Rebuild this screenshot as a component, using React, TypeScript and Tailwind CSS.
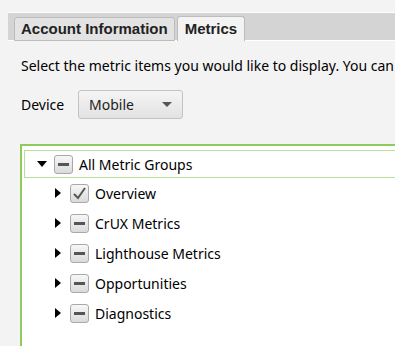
import React from "react";

const Tri = ({ down }: { down?: boolean }) =>
  down ? (
    <svg width="10" height="7" viewBox="0 0 10 7" className="block">
      <polygon points="0,0 10,0 5,6" fill="#000" />
    </svg>
  ) : (
    <svg width="7" height="10" viewBox="0 0 7 10" className="block">
      <polygon points="0,0 6,5 0,10" fill="#000" />
    </svg>
  );

const Box = ({ checked }: { checked?: boolean }) => (
  <div className="w-[19px] h-[19px] rounded-[3px] border border-[#a9a9a9] bg-gradient-to-b from-[#f7f7f7] to-[#dadada] flex items-center justify-center shrink-0">
    {checked ? (
      <svg width="15" height="15" viewBox="0 0 15 15">
        <path d="M2 8 L6 12 L13 2" fill="none" stroke="#555" strokeWidth="2" />
      </svg>
    ) : (
      <div className="w-[11px] h-[3px] bg-[#555]" />
    )}
  </div>
);

const Row = ({ label, checked }: { label: string; checked?: boolean }) => (
  <div className="h-[30px] flex items-center pl-[31px]">
    <div className="w-[15px]">
      <Tri />
    </div>
    <Box checked={checked} />
    <span className="ml-[6px] text-[14px] text-black">{label}</span>
  </div>
);

export default function App() {
  return (
    <div
      className="w-[395px] h-[346px] overflow-hidden bg-[#f3f3f3]"
      style={{ fontFamily: '"Noto Sans", "Open Sans", sans-serif' }}
    >
      <div className="w-[700px] pt-[12px] pl-[8px]">
        <div className="h-[29px] border-t border-white bg-[#d4d4d4] border-b border-[#b9b9b9] flex items-end pl-[6px] gap-[2px]">
          <div
            className="h-[24px] -mb-px px-[6px] flex items-center bg-[#e3e3e3] border border-[#bcbcbc] rounded-t-[3px] text-[15px] font-bold text-[#222]"
            style={{ fontFamily: '"Liberation Sans", Arial, sans-serif' }}
          >
            Account Information
          </div>
          <div
            className="h-[25px] -mb-px px-[7px] flex items-center bg-[#f3f3f3] border border-b-0 border-[#bcbcbc] rounded-t-[3px] text-[15px] font-bold text-[#222]"
            style={{ fontFamily: '"Liberation Sans", Arial, sans-serif' }}
          >
            Metrics
          </div>
        </div>
        <div className="pl-[13px] pt-[15px] text-[14px] text-black whitespace-nowrap leading-[20px]">
          Select the metric items you would like to display. You can reorder them by dragging.
        </div>
        <div className="pl-[13px] mt-[14px] flex items-center">
          <span className="w-[57px] text-[14px] text-black">Device</span>
          <div className="w-[105px] h-[29px] rounded-[3px] border border-[#c2c2c2] bg-gradient-to-b from-[#f5f5f5] to-[#e2e2e2] flex items-center pl-[10px] pr-[10px] justify-between">
            <span className="text-[14px] text-[#222]">Mobile</span>
            <svg width="10" height="5" viewBox="0 0 10 5">
              <polygon points="0,0 10,0 5,5" fill="#555" />
            </svg>
          </div>
        </div>
        <div className="ml-[12px] mt-[25px] h-[220px] border-2 border-[#8fca5c] bg-white pt-[4px] pl-[2px]">
          <div className="h-[28px] border border-[#b8e09a] flex items-center pl-[12px]">
            <div className="w-[17px]">
              <Tri down />
            </div>
            <Box />
            <span className="ml-[6px] text-[14px] text-black">All Metric Groups</span>
          </div>
          <Row label="Overview" checked />
          <Row label="CrUX Metrics" />
          <Row label="Lighthouse Metrics" />
          <Row label="Opportunities" />
          <Row label="Diagnostics" />
        </div>
      </div>
    </div>
  );
}
